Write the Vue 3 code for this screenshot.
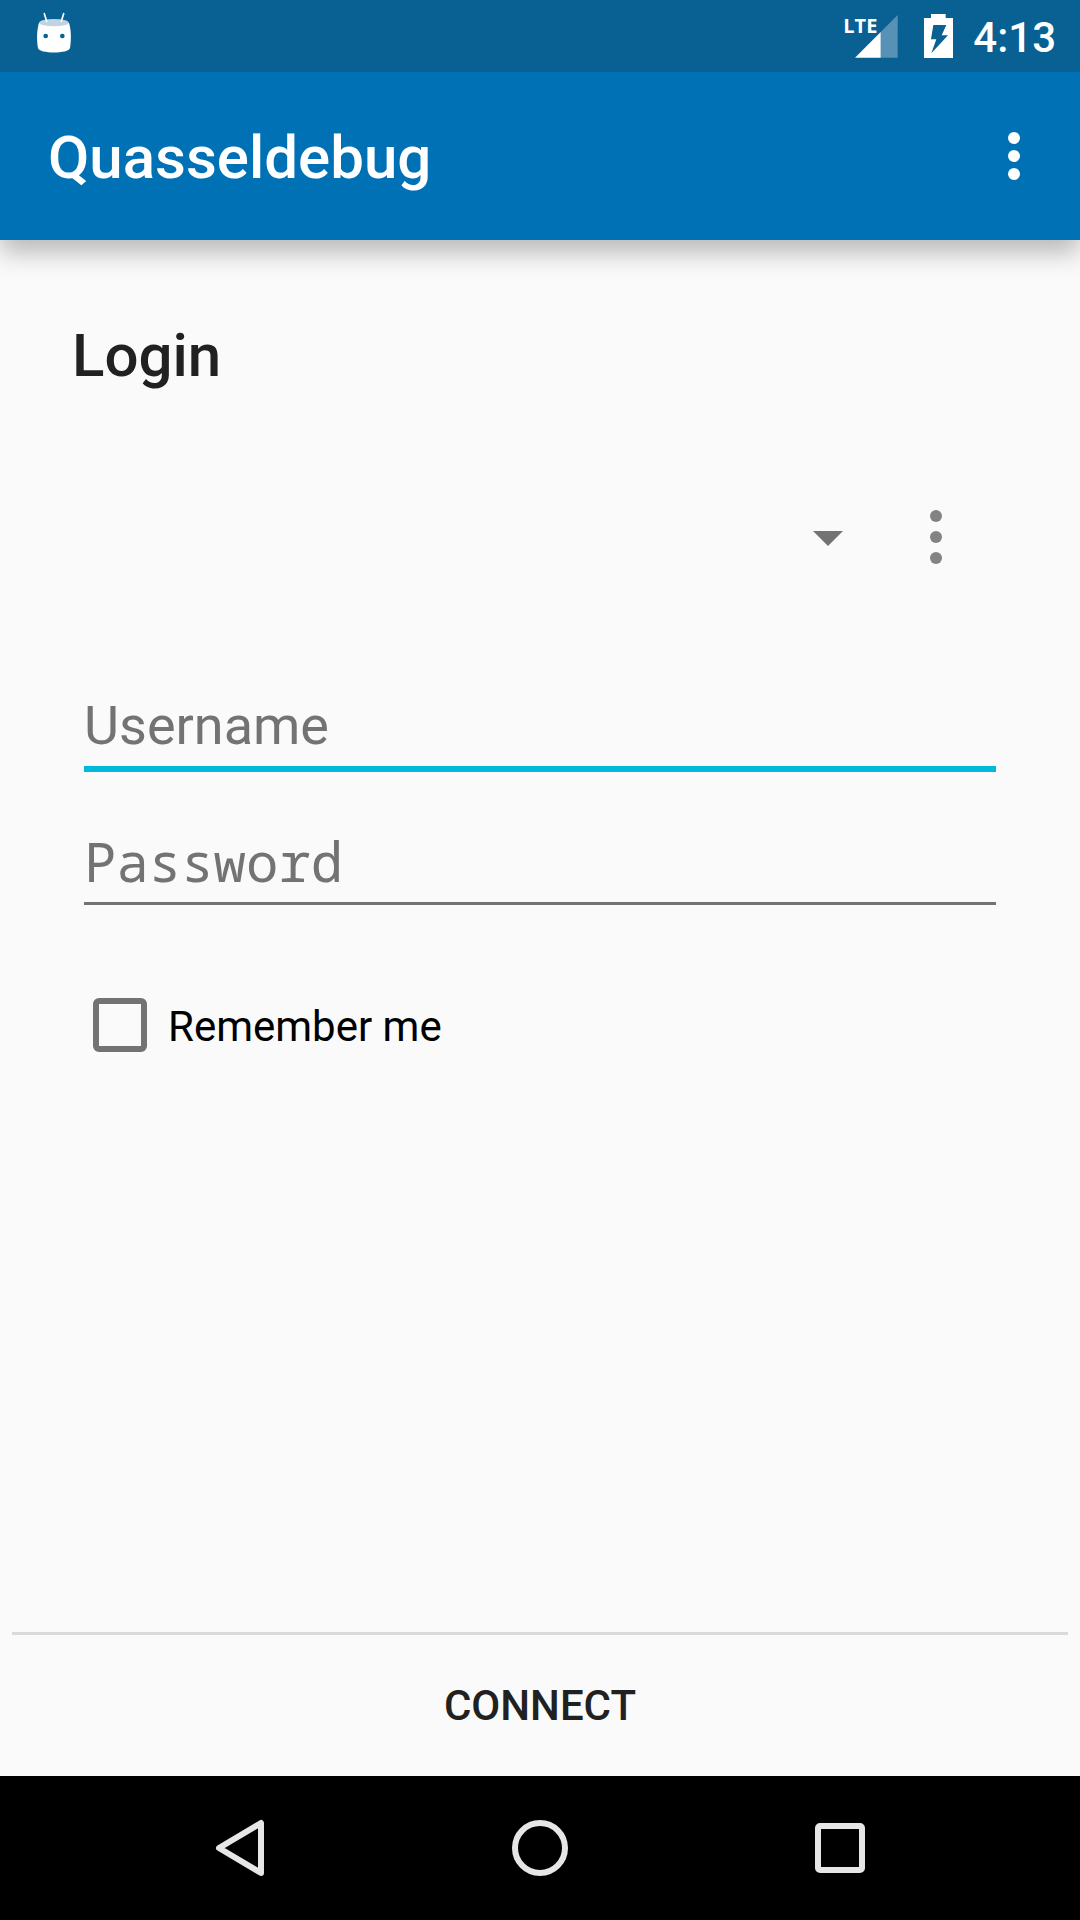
<script setup>
import { ref } from 'vue'

const username = ref('')
const password = ref('')
const remember = ref(false)
const account = ref('')
</script>

<template>
  <div class="screen">
    <header class="top">
      <div class="status">
        <svg class="droid" viewBox="108 36 108 144" aria-hidden="true">
          <path d="M117 68C110 90 110 122 114 144C117 162 207 162 210 144C214 122 214 90 207 68Z" fill="#fff" />
          <ellipse cx="162" cy="68" rx="44" ry="11" fill="#bfd3e2" />
          <path d="M133 41L140 64M191 41L184 64" stroke="#fff" stroke-width="5" stroke-linecap="round" />
          <circle cx="137" cy="108" r="7" fill="#086093" />
          <circle cx="187" cy="108" r="7" fill="#086093" />
        </svg>
        <div class="indicators">
          <div class="signal">
            <span class="network">LTE</span>
            <svg viewBox="106 43 129 129" aria-hidden="true">
              <path d="M183 94L234 43V171H183Z" fill="#5791b6" />
              <path d="M106 171L183 94V171Z" fill="#fff" />
            </svg>
          </div>
          <svg class="battery" viewBox="309 42 87 132" aria-hidden="true">
            <path
              fill="#fff"
              fill-rule="evenodd"
              d="M309 54H330V42H374V54H396V174H309ZM337 75L330 118H346L331 160L381 106H362L376 75Z"
            />
          </svg>
          <time class="clock">4:13</time>
        </div>
      </div>
      <div class="toolbar">
        <h1>Quasseldebug</h1>
        <button class="menu" type="button" aria-label="More options">
          <svg width="12" height="48" viewBox="0 0 12 48" fill="#fff">
            <circle cx="6" cy="6" r="6" />
            <circle cx="6" cy="24" r="6" />
            <circle cx="6" cy="42" r="6" />
          </svg>
        </button>
      </div>
    </header>

    <form class="login" @submit.prevent>
      <main>
        <h2>Login</h2>
        <div class="account">
          <div class="spinner">
            <select v-model="account" aria-label="Account">
              <option value=""></option>
            </select>
          </div>
          <button type="button" aria-label="Account options">
            <svg width="14" height="56" viewBox="0 0 14 56" fill="#838383">
              <circle cx="7" cy="7" r="6" />
              <circle cx="7" cy="28" r="6" />
              <circle cx="7" cy="49" r="6" />
            </svg>
          </button>
        </div>
        <div class="fields">
          <input v-model="username" class="active" type="text" placeholder="Username" aria-label="Username" />
          <input v-model="password" class="secret" type="password" placeholder="Password" aria-label="Password" />
        </div>
        <label class="remember" for="remember">
          <input id="remember" v-model="remember" type="checkbox" />
          <span>Remember me</span>
        </label>
      </main>
      <footer>
        <button type="submit">CONNECT</button>
      </footer>
    </form>

    <nav>
      <button type="button" aria-label="Back">
        <svg width="60" height="60" viewBox="0 0 60 60">
          <path d="M9 30L51 5V55Z" />
        </svg>
      </button>
      <button type="button" aria-label="Home">
        <svg width="60" height="60" viewBox="0 0 60 60">
          <circle cx="30" cy="30" r="25" />
        </svg>
      </button>
      <button type="button" aria-label="Recent apps">
        <svg width="60" height="60" viewBox="0 0 60 60">
          <rect x="8" y="8" width="44" height="44" rx="2" />
        </svg>
      </button>
    </nav>
  </div>
</template>

<style>
body {
  margin: 0;
  background: #fafafa;
}
</style>

<style scoped>
.screen {
  display: flex;
  flex-direction: column;
  min-height: 100vh;
  overflow-x: hidden;
  background: #fafafa;
  color: #212121;
  font-family: Roboto, "Noto Sans", sans-serif;
}

svg {
  display: block;
}

button {
  display: flex;
  align-items: center;
  justify-content: center;
  padding: 0;
  border: 0;
  background: none;
  color: inherit;
  font: inherit;
}

input,
select {
  appearance: none;
  box-sizing: border-box;
  margin: 0;
  padding: 0;
  border: 0;
  border-radius: 0;
  outline: 0;
  background: none;
  color: inherit;
  font: inherit;
}

h1,
h2 {
  margin: 0;
  font-size: 60px;
  font-weight: 500;
  line-height: 72px;
}

.top {
  color: #fff;
  box-shadow: 0 12px 24px rgba(0, 0, 0, 0.27);
}

.status {
  display: flex;
  align-items: center;
  justify-content: space-between;
  height: 72px;
  padding: 0 24px 0 36px;
  background: #086093;
}

.droid {
  width: 36px;
  height: 48px;
  fill: none;
}

.indicators {
  display: flex;
  align-items: center;
}

.signal {
  position: relative;
  width: 43px;
  margin-right: 26px;
}

.network {
  position: absolute;
  top: 0;
  left: -12px;
  font: bold 20px/22px "Open Sans", "Noto Sans", sans-serif;
}

.battery {
  width: 29px;
  height: 44px;
  margin-right: 20px;
}

.clock {
  padding-top: 4px;
  font-size: 42px;
  font-weight: 500;
  line-height: 50px;
}

.toolbar {
  display: flex;
  align-items: center;
  justify-content: space-between;
  height: 168px;
  padding: 0 6px 0 48px;
  background: #0071b5;
}

h1 {
  padding-top: 4px;
}

.menu {
  width: 120px;
  height: 144px;
}

.login {
  display: flex;
  flex: 1;
  flex-direction: column;
}

main {
  flex: 1;
  padding: 80px 72px 0;
}

.account {
  display: flex;
  height: 146px;
  margin-top: 72px;
}

.account button {
  width: 144px;
}

.spinner {
  position: relative;
  flex: 1;
}

.spinner select {
  width: 100%;
  height: 100%;
  font-size: 54px;
}

.spinner::after {
  content: "";
  position: absolute;
  top: 67px;
  right: 21px;
  width: 30px;
  height: 15px;
  background: #737373;
  clip-path: polygon(0 0, 100% 0, 50% 100%);
  pointer-events: none;
}

.fields {
  display: flex;
  flex-direction: column;
  gap: 58px;
  margin: 85px 12px 0;
}

.fields input {
  width: 100%;
  height: 75px;
  padding-bottom: 10px;
  border-bottom: 3px solid #737373;
  font-size: 54px;
  line-height: 62px;
}

.fields .active {
  height: 77px;
  border-bottom: 6px solid #00b8d9;
}

.fields .secret {
  font-family: "Droid Sans Mono", "Noto Sans Mono", "DejaVu Sans Mono", monospace;
}

.fields input::placeholder {
  color: #737373;
  opacity: 1;
}

.remember {
  display: flex;
  align-items: flex-end;
  gap: 21px;
  margin: 93px 0 0 21px;
  color: #000;
  font-size: 42px;
  line-height: 50px;
}

.remember input {
  width: 54px;
  height: 54px;
  border: 6px solid #737373;
  border-radius: 6px;
}

.remember input:checked {
  background: #00b8d9;
}

footer {
  margin: 0 12px;
  border-top: 3px solid #dadada;
}

footer button {
  width: 100%;
  height: 141px;
  font-size: 42px;
  font-weight: 500;
  line-height: 50px;
}

nav {
  display: flex;
  height: 144px;
  padding: 0 90px;
  background: #000;
}

nav button {
  flex: 1;
}

nav svg {
  fill: none;
  stroke: #e6e6e6;
  stroke-width: 6;
  stroke-linejoin: round;
}
</style>
